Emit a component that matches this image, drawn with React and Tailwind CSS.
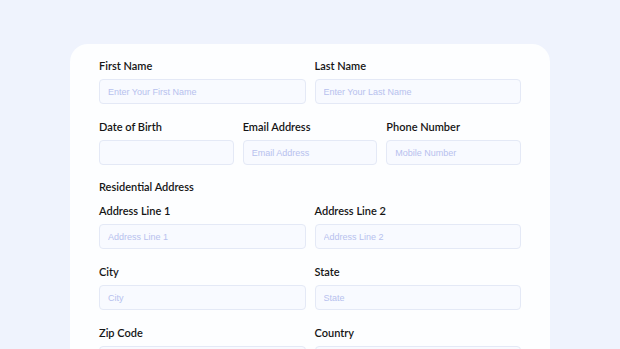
import React from "react";

function Field({ label, placeholder }) {
  return (
    <div className="flex flex-col">
      <label className="mb-[6px] text-[11px] leading-[14px] font-semibold text-[#151515]">{label}</label>
      <input
        type="text"
        placeholder={placeholder}
        className="h-[25px] w-full rounded-[4px] border border-[#e4e9f6] bg-[#f8faff] px-[8px] text-[9px] font-['Liberation_Sans',sans-serif] outline-none placeholder:text-[#b7c1ee]"
      />
    </div>
  );
}

export default function App() {
  return (
    <div className="h-[349px] w-full overflow-hidden bg-[#eff3fd] pt-[44px] font-['Lato',sans-serif]">
      <div className="mx-auto w-[480px] rounded-t-[18px] bg-[#fdfeff] px-[29px] pt-[15px] pb-8">
        {/* Personal details */}
        <div className="grid grid-cols-2 gap-x-[9px]">
          <Field label="First Name" placeholder="Enter Your First Name" />
          <Field label="Last Name" placeholder="Enter Your Last Name" />
        </div>
        <div className="mt-[16px] grid grid-cols-3 gap-x-[9px]">
          <Field label="Date of Birth" placeholder="" />
          <Field label="Email Address" placeholder="Email Address" />
          <Field label="Phone Number" placeholder="Mobile Number" />
        </div>

        {/* Address */}
        <h2 className="mt-[15px] text-[11px] leading-[14px] font-semibold text-[#151515]">Residential Address</h2>
        <div className="mt-[10px] grid grid-cols-2 gap-x-[9px] gap-y-[16px]">
          <Field label="Address Line 1" placeholder="Address Line 1" />
          <Field label="Address Line 2" placeholder="Address Line 2" />
          <Field label="City" placeholder="City" />
          <Field label="State" placeholder="State" />
          <Field label="Zip Code" placeholder="Zip Code" />
          <Field label="Country" placeholder="Country" />
        </div>
      </div>
    </div>
  );
}
